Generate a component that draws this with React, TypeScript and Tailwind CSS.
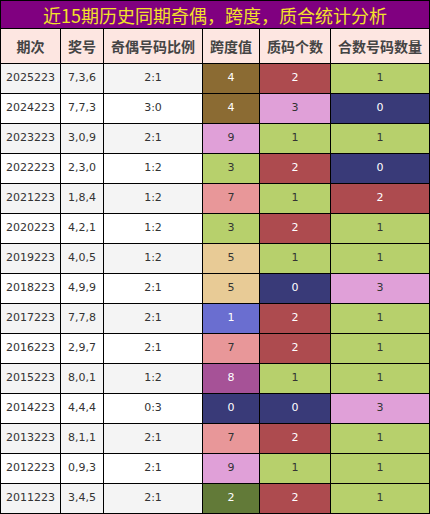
import React from 'react';

type Cell = [string, string]; // [value, colour key]

const colors: Record<string, string> = {
  brown: 'bg-[#8b6b33] text-white',
  red: 'bg-[#ad4b4f] text-white',
  green: 'bg-[#b7d06c] text-[#333]',
  pink: 'bg-[#e0a0d8] text-[#333]',
  navy: 'bg-[#393a78] text-white',
  salmon: 'bg-[#e89799] text-[#333]',
  tan: 'bg-[#e8cb96] text-[#333]',
  blue: 'bg-[#6a6ed0] text-white',
  purple: 'bg-[#a65297] text-white',
  olive: 'bg-[#627a38] text-white',
};

const rows: { issue: string; nums: string; ratio: string; cells: Cell[] }[] = [
  { issue: '2025223', nums: '7,3,6', ratio: '2:1', cells: [['4', 'brown'], ['2', 'red'], ['1', 'green']] },
  { issue: '2024223', nums: '7,7,3', ratio: '3:0', cells: [['4', 'brown'], ['3', 'pink'], ['0', 'navy']] },
  { issue: '2023223', nums: '3,0,9', ratio: '2:1', cells: [['9', 'pink'], ['1', 'green'], ['1', 'green']] },
  { issue: '2022223', nums: '2,3,0', ratio: '1:2', cells: [['3', 'green'], ['2', 'red'], ['0', 'navy']] },
  { issue: '2021223', nums: '1,8,4', ratio: '1:2', cells: [['7', 'salmon'], ['1', 'green'], ['2', 'red']] },
  { issue: '2020223', nums: '4,2,1', ratio: '1:2', cells: [['3', 'green'], ['2', 'red'], ['1', 'green']] },
  { issue: '2019223', nums: '4,0,5', ratio: '1:2', cells: [['5', 'tan'], ['1', 'green'], ['1', 'green']] },
  { issue: '2018223', nums: '4,9,9', ratio: '2:1', cells: [['5', 'tan'], ['0', 'navy'], ['3', 'pink']] },
  { issue: '2017223', nums: '7,7,8', ratio: '2:1', cells: [['1', 'blue'], ['2', 'red'], ['1', 'green']] },
  { issue: '2016223', nums: '2,9,7', ratio: '2:1', cells: [['7', 'salmon'], ['2', 'red'], ['1', 'green']] },
  { issue: '2015223', nums: '8,0,1', ratio: '1:2', cells: [['8', 'purple'], ['1', 'green'], ['1', 'green']] },
  { issue: '2014223', nums: '4,4,4', ratio: '0:3', cells: [['0', 'navy'], ['0', 'navy'], ['3', 'pink']] },
  { issue: '2013223', nums: '8,1,1', ratio: '2:1', cells: [['7', 'salmon'], ['2', 'red'], ['1', 'green']] },
  { issue: '2012223', nums: '0,9,3', ratio: '2:1', cells: [['9', 'pink'], ['1', 'green'], ['1', 'green']] },
  { issue: '2011223', nums: '3,4,5', ratio: '2:1', cells: [['2', 'olive'], ['2', 'red'], ['1', 'green']] },
];

const headers = ['期次', '奖号', '奇偶号码比例', '跨度值', '质码个数', '合数号码数量'];

const cjk = "font-['Noto_Sans_CJK_SC',sans-serif]";
const num = "font-['DejaVu_Sans',sans-serif] text-[11px]";

export default function App() {
  return (
    <div className="w-[430px] h-[514px] bg-white">
      <div className="grid grid-cols-[59px_42px_98px_56px_70px_98px] grid-rows-[27px_34px_repeat(15,29px)] gap-px bg-black p-px w-[430px]">
        {/* title */}
        <div className={`col-span-6 bg-[#800080] text-[#f2e12a] text-[18px] leading-none flex items-center justify-center ${cjk}`}>
          近15期历史同期奇偶，跨度，质合统计分析
        </div>

        {/* header */}
        {headers.map((h) => (
          <div key={h} className={`bg-[#fde6e1] text-[#444] text-[14px] font-bold flex items-center justify-center ${cjk}`}>
            {h}
          </div>
        ))}

        {rows.map((r, i) => {
          const plain = i % 2 === 0 ? 'bg-[#f4f4f4]' : 'bg-white';
          return (
            <React.Fragment key={r.issue}>
              <div className={`${plain} ${num} text-[#333] flex items-center justify-center`}>{r.issue}</div>
              <div className={`${plain} ${num} text-[#333] flex items-center justify-center`}>{r.nums}</div>
              <div className={`${plain} ${num} text-[#333] flex items-center justify-center`}>{r.ratio}</div>
              {r.cells.map(([v, c], j) => (
                <div key={j} className={`${colors[c]} ${num} flex items-center justify-center`}>
                  {v}
                </div>
              ))}
            </React.Fragment>
          );
        })}
      </div>
    </div>
  );
}
